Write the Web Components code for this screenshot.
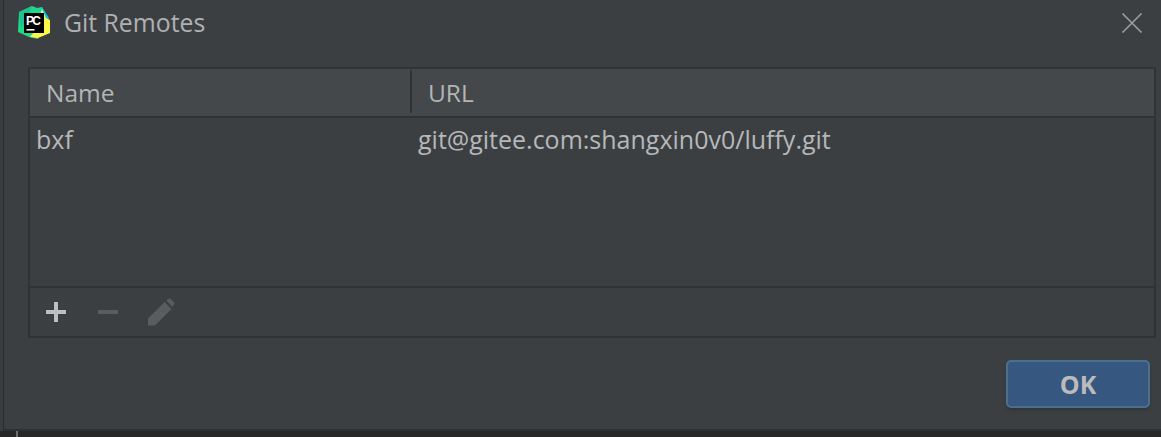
<!DOCTYPE html>
<html>
<head>
<meta charset="utf-8">
<title>Git Remotes</title>
<style>
  html, body { margin: 0; height: 437px; overflow: hidden; background: #272727; }
  body { font-family: "Open Sans", "Noto Sans", sans-serif; color: #bbbbbb; }
</style>
</head>
<body>
<git-dialog title-text="Git Remotes">
  <remotes-table>
    <remote-row name="bxf" url="git@gitee.com:shangxin0v0/luffy.git"></remote-row>
  </remotes-table>
  <ok-button slot="buttons">OK</ok-button>
</git-dialog>

<script>
// dialog frame: title bar, content, button row
class GitDialog extends HTMLElement {
  constructor() {
    super();
    const root = this.attachShadow({ mode: 'open' });
    root.innerHTML = `
      <style>
        :host { display: block; width: 1161px; height: 437px; }
        .edge { height: 431px; padding-left: 3px; background: #3a3d3f; }
        .win {
          box-sizing: border-box; height: 431px; background: #3c3f41;
          border-left: 1px solid #2b2c2d; border-bottom: 2px solid #2f3031;
          display: flex; flex-direction: column;
        }
        .title { height: 45px; flex: none; display: flex; align-items: center; padding: 0 18px 0 14px; }
        .title svg.logo { width: 33px; height: 33px; flex: none; }
        .title span { margin-left: 13px; font-size: 24.8px; color: #afb1b3; flex: 1; position: relative; top: -1px; }
        .close { width: 22px; height: 22px; flex: none; }
        .content { padding: 22px 5px 0 24px; }
        .buttons { display: flex; justify-content: flex-end; padding: 22px 11px 0 0; }
        .tick { width: 2px; height: 6px; margin-left: 16px; background: #6b6d6e; }
      </style>
      <div class="edge">
        <div class="win">
          <div class="title">
            <svg class="logo" viewBox="0 0 33 33">
              <polygon points="1,6 14,0 19,2 24,1 27,8 20,33 11,31 0,26" fill="#21d789"/>
              <polygon points="24,1 31,12 28,18 22,8" fill="#07c3f2"/>
              <polygon points="24,3 28,12 32,14 32,27 20,32 12,31 16,26" fill="#fcf84a"/>
              <polygon points="1,6 14,0 10,12 3,22" fill="#1fc28f"/>
              <rect x="6" y="7" width="20" height="20" fill="#000"/>
              <rect x="8.5" y="23" width="8" height="1.6" fill="#fff"/>
              <text x="8" y="18.5" font-family="Liberation Sans, sans-serif" font-weight="700" font-size="12" fill="#fff" textLength="15">PC</text>
            </svg>
            <span></span>
            <svg class="close" viewBox="0 0 22 22">
              <path d="M1.5 1.5 L20.5 20.5 M20.5 1.5 L1.5 20.5" stroke="#9c9e9f" stroke-width="1.6" fill="none"/>
            </svg>
          </div>
          <div class="content"><slot></slot></div>
          <div class="buttons"><slot name="buttons"></slot></div>
        </div>
      </div>
      <div class="tick"></div>
    `;
    root.querySelector('.title span').textContent = this.getAttribute('title-text');
  }
}

// table with header and the add / remove / edit toolbar
class RemotesTable extends HTMLElement {
  constructor() {
    super();
    const root = this.attachShadow({ mode: 'open' });
    root.innerHTML = `
      <style>
        :host { display: block; }
        .box { box-sizing: border-box; height: 271px; border: 2px solid #323232; display: flex; flex-direction: column; }
        .head {
          box-sizing: border-box; height: 49px; flex: none; display: grid; grid-template-columns: 380px 1fr;
          background: #44484a; border-bottom: 2px solid #323232; font-size: 24.5px; color: #b3b5b6;
        }
        .head div { display: flex; align-items: center; padding-left: 16px; }
        .head div + div { border-left: 2px solid #323232; margin: 1px 0 3px; padding-top: 2px; box-sizing: border-box; }
        .rows { flex: 1; }
        .tools {
          height: 50px; flex: none; box-sizing: border-box; border-top: 2px solid #323232;
          display: flex; align-items: center; gap: 30px; padding: 0 0 0 15px;
        }
        .tools svg { width: 22px; height: 26px; flex: none; }
        .tools svg.edit { width: 28px; height: 28px; margin-left: -2px; }
      </style>
      <div class="box">
        <div class="head"><div>Name</div><div>URL</div></div>
        <div class="rows"><slot></slot></div>
        <div class="tools">
          <svg viewBox="0 0 22 26"><path d="M1 13 H21 M11 3 V23" stroke="#bdbebf" stroke-width="4" fill="none"/></svg>
          <svg viewBox="0 0 22 26"><path d="M1 13 H21" stroke="#5a5c5d" stroke-width="4" fill="none"/></svg>
          <svg class="edit" viewBox="0 0 28 28"><path d="M1 27.5 V20.5 L17.5 4 L24.5 11 L8 27.5 Z M19.5 2.5 L21 1 Q22.3 -0.2 23.6 1 L26.8 4.2 Q28 5.5 26.8 6.8 L25.6 9 Z" fill="#5a5c5d"/></svg>
        </div>
      </div>
    `;
  }
}

class RemoteRow extends HTMLElement {
  constructor() {
    super();
    const root = this.attachShadow({ mode: 'open' });
    root.innerHTML = `
      <style>
        :host { display: grid; grid-template-columns: 382px 1fr; height: 42px; align-items: center; font-size: 25px; color: #b6b8b9; }
        div { padding-left: 6px; }
      </style>
      <div></div><div></div>
    `;
    const cells = root.querySelectorAll('div');
    cells[0].textContent = this.getAttribute('name');
    cells[1].textContent = this.getAttribute('url');
  }
}

class OkButton extends HTMLElement {
  constructor() {
    super();
    const root = this.attachShadow({ mode: 'open' });
    root.innerHTML = `
      <style>
        :host {
          display: flex; box-sizing: border-box; width: 144px; height: 48px; align-items: center; justify-content: center;
          background: #365880; border: 2px solid #4c708c; border-radius: 5px;
          font-size: 25px; font-weight: 700; color: #bbbbbb; box-shadow: 0 2px 3px rgba(0,0,0,.18);
        }
      </style>
      <slot></slot>
    `;
  }
}

customElements.define('git-dialog', GitDialog);
customElements.define('remotes-table', RemotesTable);
customElements.define('remote-row', RemoteRow);
customElements.define('ok-button', OkButton);
</script>
</body>
</html>
